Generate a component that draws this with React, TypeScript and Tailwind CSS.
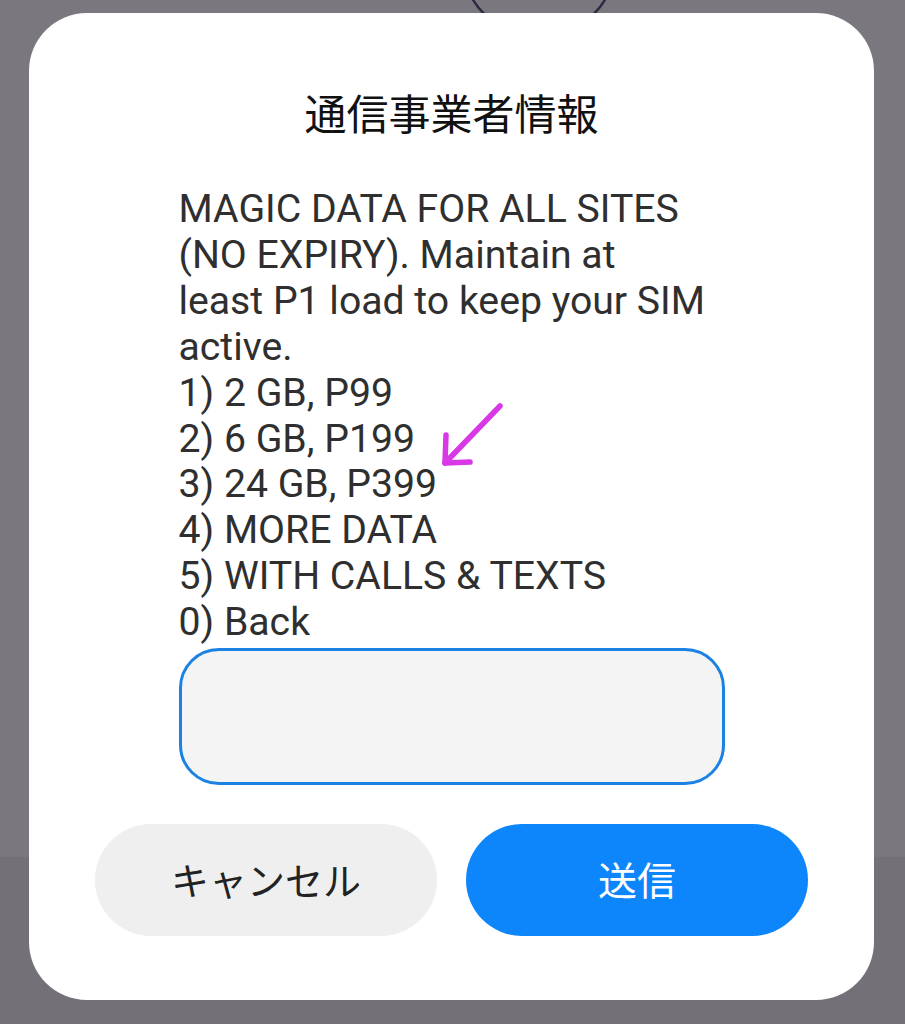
import React from "react";

export default function App() {
  const lines = [
    "MAGIC DATA FOR ALL SITES",
    "(NO EXPIRY). Maintain at",
    "least P1 load to keep your SIM",
    "active.",
    "1) 2 GB, P99",
    "2) 6 GB, P199",
    "3) 24 GB, P399",
    "4) MORE DATA",
    "5) WITH CALLS & TEXTS",
    "0) Back",
  ];
  return (
    <div className="relative h-[1024px] w-[905px] overflow-hidden bg-[linear-gradient(to_bottom,#7b777e_857px,#747077_857px)] pt-[13px]">
      <svg className="absolute left-0 top-0" width="905" height="40" viewBox="0 0 905 40">
        <circle cx="539" cy="-40" r="77" fill="none" stroke="#2c2842" strokeWidth="2.5" />
      </svg>
      <div className="relative ml-[29px] flex h-[987px] w-[845px] flex-col items-center rounded-[58px] bg-white">
        <div
          className="mt-[73px] text-[42px] leading-[52px] text-[#111]"
          style={{ fontFamily: '"Noto Sans CJK JP", sans-serif' }}
        >
          通信事業者情報
        </div>
        <div className="mt-[49px] w-[546px]">
          <div
            className="relative whitespace-nowrap text-[39.2px] leading-[45.9px] text-[#2f2f2f]"
            style={{ fontFamily: "Roboto, sans-serif" }}
          >
            {lines.map((l) => (
              <div key={l}>{l}</div>
            ))}
            <svg
              className="absolute left-[262px] top-[215px]"
              width="66"
              height="66"
              viewBox="0 0 66 66"
            >
              <g stroke="#d838e6" strokeWidth="5.5" strokeLinecap="round" strokeLinejoin="round" fill="none">
                <path d="M59 4 L4 61" />
                <path d="M5 33 L4 61 L29 60" />
              </g>
            </svg>
          </div>
          <div className="mt-[2px] h-[137px] w-full rounded-[40px] border-[3px] border-[#1b82e3] bg-[#f4f4f4]" />
        </div>
        <div className="mt-[39px] flex w-full gap-[29px] px-[66px]">
          <div
            className="flex h-[112px] flex-1 items-center justify-center rounded-full bg-[#efefef] pb-[3px] text-[38px] text-[#222]"
            style={{ fontFamily: '"Noto Sans CJK JP", sans-serif' }}
          >
            キャンセル
          </div>
          <div
            className="flex h-[112px] flex-1 items-center justify-center rounded-full bg-[#0d86fb] pb-[3px] text-[39px] text-white"
            style={{ fontFamily: '"Noto Sans CJK JP", sans-serif' }}
          >
            送信
          </div>
        </div>
      </div>
    </div>
  );
}
